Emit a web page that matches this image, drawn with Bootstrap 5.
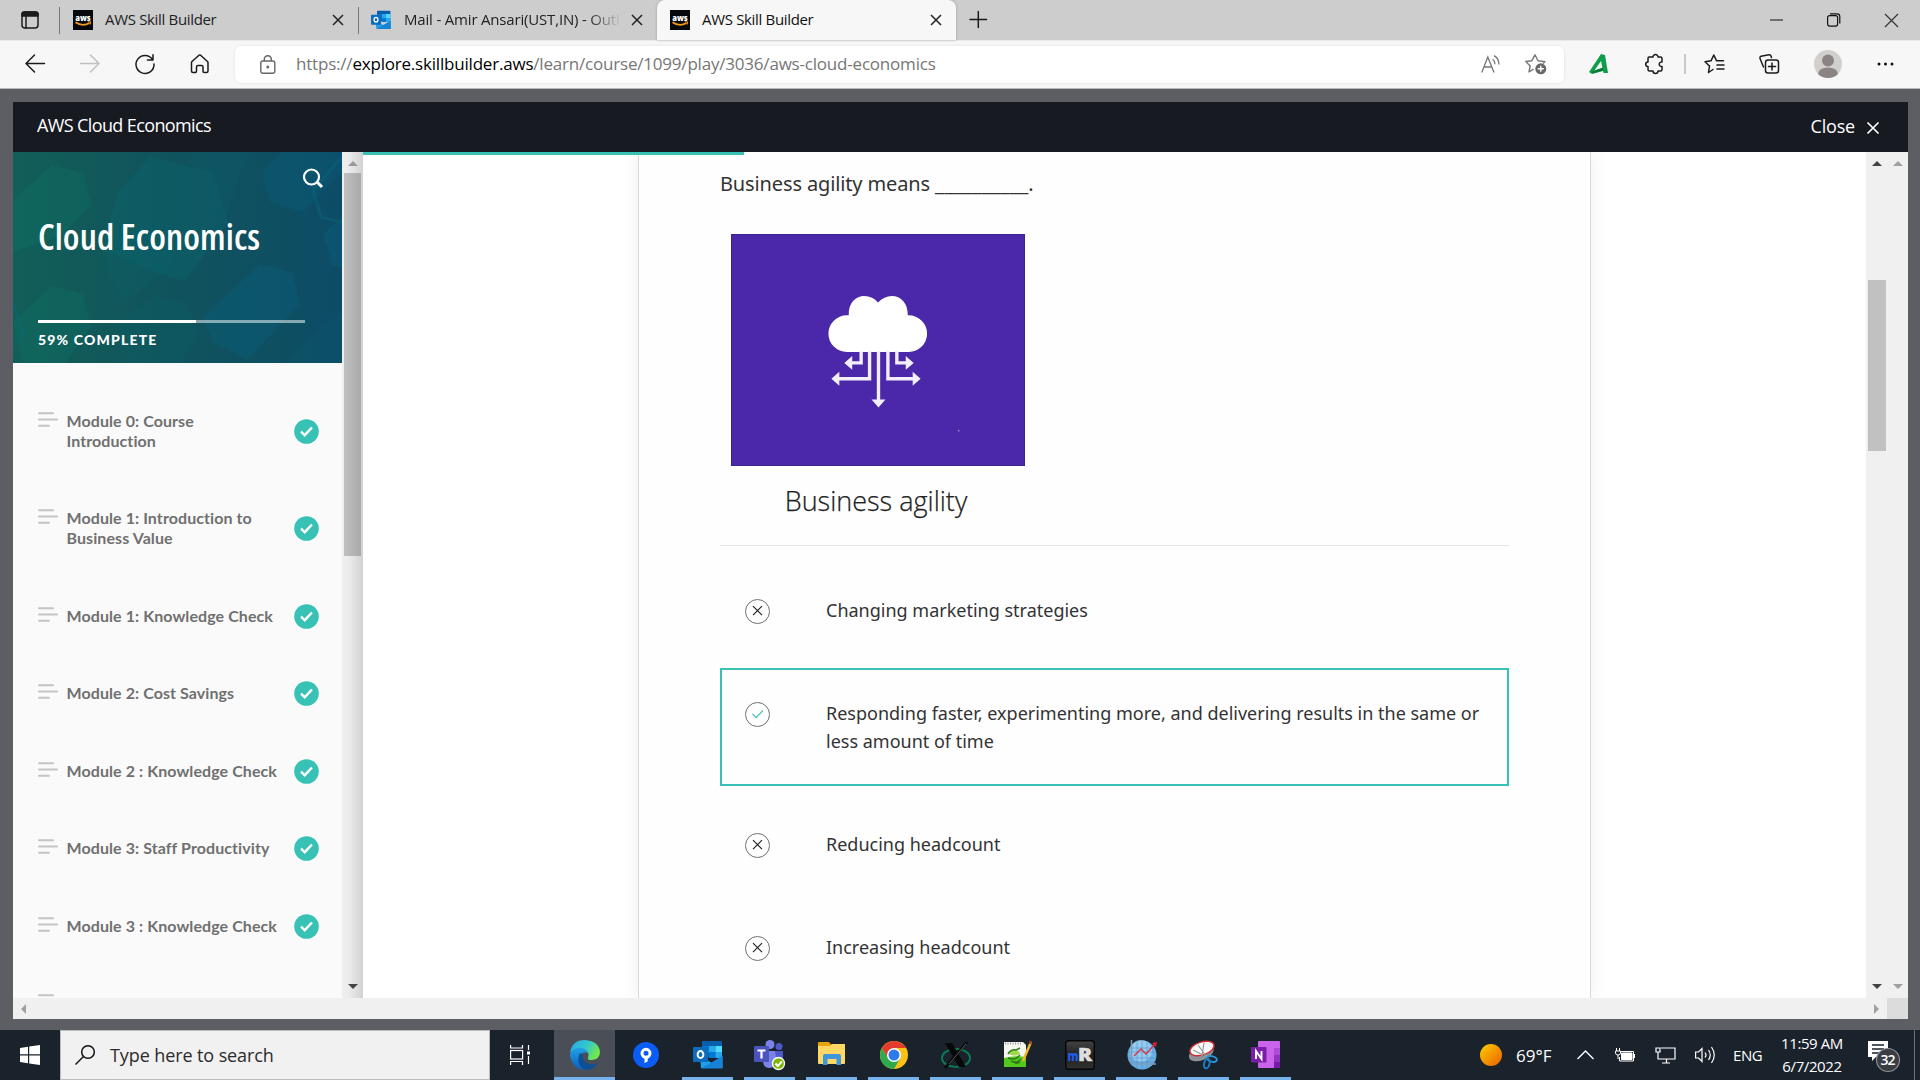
<!DOCTYPE html>
<html lang="en">
<head>
<meta charset="utf-8">
<title>AWS Skill Builder</title>
<link href="https://cdn.jsdelivr.net/npm/bootstrap@5.3.0/dist/css/bootstrap.min.css" rel="stylesheet">
<style>
html,body{height:1080px;width:1920px;overflow:hidden}
body{background:#5d5e63;font-family:"Open Sans","Noto Sans",sans-serif;color:#1b1b1b}
svg{display:block;flex:none;overflow:visible}
.ico{fill:none;stroke:#1b1b1b;stroke-width:1.5;stroke-linecap:round;stroke-linejoin:round}
.tabstrip{height:40px;background:#cdcdcd;font-size:15px;letter-spacing:-.33px;line-height:37px;color:#222;white-space:nowrap}
.tabstrip span{padding-bottom:2px}
.tab-a{width:299px;padding-left:13px;border-right:1.5px solid #77777a;border-image:linear-gradient(transparent 8px,#77777a 8px,#77777a 33px,transparent 33px) 1}
.tab-pin{width:60px;padding-left:21px;border-right:1.5px solid #77777a;border-image:linear-gradient(transparent 8px,#77777a 8px,#77777a 33px,transparent 33px) 1}
.tab-b{width:298px;padding-left:12px}
.tab-c{width:299px;padding-left:13px;background:#f7f7f7;border-radius:8px 8px 0 0;color:#111;box-shadow:0 0 3px rgba(0,0,0,.25)}
.tab-x{margin-right:14px}
.tab-name{margin-left:12px}
.tab-fade{width:219px;letter-spacing:-.18px;margin-left:13px;-webkit-mask-image:linear-gradient(90deg,#000 84%,transparent 99%)}
.win-ctl{gap:44px;margin-right:22px}
.toolbar{height:49px;background:#f7f7f7;border-top:1px solid #e9e9e9;border-bottom:1px solid #b9b9bb;padding-bottom:1px}
.nav-set{width:235px;padding-left:25px;gap:35px}
.urlbox{width:1329px;height:37px;background:#fff;border-radius:6px;padding:0 17px 0 25px;font-size:17px;letter-spacing:-.2px;line-height:36px;color:#767676;box-shadow:0 0 3px rgba(0,0,0,.1)}
.urltext{width:1185px;margin-left:20px;padding-bottom:1px}
.urltext span{color:#000}
.ext-set{padding-left:25px}
.ext-puzzle{margin-left:34px}
.ext-sep{margin:0 18px 0 21px}
.ext-fav,.ext-col{margin-right:34px}
.ext-user{margin-right:35px}
.player{width:1895px;height:917px;margin:13px 0 0 13px;background:#fff}
.player-head{height:50px;background:#171a21;color:#fff;font-size:18px;padding:0 29px 4px 24px}
.player-name{letter-spacing:-.62px}
.close-link{gap:12px;padding-top:2px;letter-spacing:-.2px}
.player-main{height:846px}
.outline{width:329px;background:#fafafa;overflow:hidden}
.outline-head{height:211px;position:relative;color:#fff}
.outline-head>.art{position:absolute;inset:0;overflow:hidden}
.outline-in{position:relative;padding:16px 19px 0 25px}
.course{font-size:36px;font-weight:600;font-stretch:75%;letter-spacing:.08px;line-height:44px;margin:27px 0 0;white-space:nowrap}
.prog{height:3px;width:267px;background:rgba(255,255,255,.5);margin-top:61px}
.prog>div{height:3px;background:#fff}
.pct{font:900 14px/20px Lato,sans-serif;letter-spacing:1.17px;margin-top:7px}
.lessons{padding-top:19px;font:700 16px/20px Lato,sans-serif;letter-spacing:.08px;color:#707070}
.lesson{padding:28.75px 23px 28.75px 25px}
.lesson .bars{margin:1px 8.5px auto 0}
.lesson-name{width:220px}
.tick{width:25px;height:25px;margin:-2px 0 -3px}
.vscroll{width:21px;background:#f0f0f0;padding:9px 0}
.vscroll-side{background:linear-gradient(90deg,#efefef,#ececec 30%,#d2d2d2)}
.vthumb{width:17px;height:383px;margin-top:7px;background:linear-gradient(90deg,#c0c0c0,#a9a9a9)}
.vthumb-main{width:18px;height:171px;margin-top:114px;background:#c1c1c1}
.stage{width:1503px;position:relative;overflow:hidden}
.stage-bar{position:absolute;left:0;top:0;height:3px;width:381px;background:#37c2b5;z-index:2}
.quiz{width:953px;margin-left:275px;height:846px;border:solid #d9d9d9;border-width:0 1px;background:#fefefe;box-shadow:0 0 18px rgba(0,0,0,.07);padding:16px 81px 0;font-family:"Noto Sans",sans-serif;color:#333}
.ask{font-size:20px;line-height:30px;letter-spacing:-.13px;margin:0;white-space:nowrap}
.ask span{font-size:21px;letter-spacing:0}
.pic{width:294px;height:232px;margin:35px 0 0 11px;background:#4b28a9;border:1px solid #3d248c}
.cap{width:294px;margin:15px 0 0 9px;font:300 27px/40px "Open Sans",sans-serif;text-align:center;color:#222;white-space:nowrap;-webkit-text-stroke:.25px #222}
.rule{height:1px;background:#e6e6e6;margin:24px 0 19px}
.choice{border:2px solid transparent;padding:29px 20px 29px 23px;font-size:18px;line-height:28px;margin-bottom:13px}
.choice.right{border-color:#37c2b5}
.choice svg{margin:3px 56px 0 0}
.hscroll{height:21px;background:#f0f0f0}
.hs-corner{width:21px;height:21px;background:#dcdcdc}
.taskbar{height:50px;margin-top:11px;background:#1a222c;color:#fff}
.startbtn{width:60px;padding-left:20px}
.searchbox{width:430px;height:50px;background:#f1f1f1;border:1px solid #bbb;color:#2b2b2b;font-size:18px;letter-spacing:-.1px;padding-left:14px}
.searchbox span{margin-left:15px}
.taskview{width:64px;padding-left:20px}
.app{width:51px;height:50px;margin-right:11px;padding-top:3px;border-bottom:3px solid #76b3ec}
.app.idle{border-color:transparent}
.app.front{width:61px;background:#4a4f57;margin-right:5px}
.tray-time{font-size:15px;letter-spacing:-.4px;line-height:23px;text-align:center;width:66px;margin-left:15px}
.wx{font-size:17px;width:40px;margin-left:14px;padding-top:2px}
.chev{margin-left:21px}
.batt{margin-left:21px}
.mon,.spk{margin-left:19px}
.eng{font-size:15px;letter-spacing:-.4px;width:31px;margin-left:17px}
.note{margin-left:23px}
.edgeline{width:1px;height:50px;background:#6a7078;margin:0 5px 0 13px}
</style>
<script src="https://cdn.jsdelivr.net/npm/bootstrap@5.3.0/dist/js/bootstrap.bundle.min.js"></script>
</head>
<body>
<svg width="0" height="0" class="position-absolute">
<defs>
<symbol id="x" viewBox="0 0 12 12"><path d="M1 1L11 11M11 1L1 11" fill="none" stroke="#222" stroke-width="1.500"/></symbol>
<symbol id="aws" viewBox="0 0 20 20"><rect width="20" height="20" fill="#05090d"/><text x="10" y="10.500" text-anchor="middle" font-family="Open Sans" font-weight="800" font-size="8.200" textLength="15.500" lengthAdjust="spacingAndGlyphs" letter-spacing="0" fill="#fff">aws</text><path d="M2.500 12.200Q9.500 17 16.500 13" fill="none" stroke="#f79a1c" stroke-width="1.700"/><path d="M14.800 12l3-.2-.7 2.800" fill="none" stroke="#f79a1c"/></symbol>
<symbol id="outlook" viewBox="0 0 30 28"><rect x="9" y="0" width="20" height="16" rx="1" fill="#0a5fad"/><path d="M16 5h6.500v6H16z" fill="#28a8ea"/><path d="M22.500 5H29v6h-6.500z" fill="#50d9ff"/><path d="M9 5h7v7H9z" fill="#0078d4"/><path d="M16 11h6.500v6H16z" fill="#0078d4"/><path d="M22.500 11H29v6h-6.500z" fill="#28a8ea"/><path d="M7 15l12 7 10.500-7v12H8z" fill="#1ca0e8"/><path d="M8 27.500L29.500 15v12.500z" fill="#1683d8"/><rect y="6" width="15" height="15" rx="1" fill="#0f6cbd"/><ellipse cx="7.500" cy="13.500" rx="2.900" ry="3.500" fill="none" stroke="#fff" stroke-width="1.900"/></symbol>
<symbol id="bars" viewBox="0 0 20 16"><path d="M1 1.200H15M1 7.500H19M1 13.800H11" stroke="#c4c4c4" stroke-width="2" stroke-linecap="round"/></symbol>
<symbol id="ok" viewBox="0 0 25 25"><circle cx="12.500" cy="12.500" r="12.300" fill="#37c2b5"/><path d="M7 12.700l3.700 3.500 7.300-7.700" fill="none" stroke="#fff" stroke-width="2.400"/></symbol>
<symbol id="no" viewBox="0 0 25 25"><circle cx="12.500" cy="12.500" r="12" fill="#fff" stroke="#707070"/><path d="M8 7.200l9 9M17 7.200l-9 9" stroke="#222" stroke-width="1.200"/></symbol>
</defs>
</svg>

<header class="tabstrip d-flex align-items-center">
  <div class="tab-pin d-flex align-items-center h-100"><svg width="18" height="18" class="ico"><rect x="1" y="1" width="16" height="16" rx="3"/><path d="M1 4V3q0-2 2-2h12q2 0 2 2v2H1z" fill="#1b1b1b"/><path d="M5 5V17"/></svg></div>
  <div class="tab-a d-flex align-items-center h-100"><svg width="20" height="20"><use href="#aws"/></svg><span class="tab-name flex-grow-1">AWS Skill Builder</span><svg width="12" height="12" class="tab-x"><use href="#x"/></svg></div>
  <div class="tab-b d-flex align-items-center h-100"><svg width="20" height="20"><use href="#outlook"/></svg><span class="tab-name tab-fade">Mail - Amir Ansari(UST,IN) - Outl</span><svg width="12" height="12" class="ms-2"><use href="#x"/></svg></div>
  <div class="tab-c d-flex align-items-center h-100"><svg width="20" height="20"><use href="#aws"/></svg><span class="tab-name flex-grow-1">AWS Skill Builder</span><svg width="12" height="12" class="tab-x"><use href="#x"/></svg></div>
  <svg width="18" height="18" class="ico me-auto tab-x ms-3"><path d="M-2 8.500H14.500M6.300 .5V16.500"/></svg>
  <div class="win-ctl d-flex align-items-center"><svg width="13" height="13"><path d="M0 6H13" stroke="#111"/></svg><svg width="14" height="14" fill="none" stroke="#111" stroke-width="1.200"><rect x=".6" y="2.600" width="10" height="10.500" rx="2"/><path d="M3 .8h7q2.800 0 2.800 2.800v7"/></svg><svg width="13" height="13"><path d="M0 0L13 13M13 0L0 13" stroke="#333" stroke-width="1.200"/></svg></div>
</header>

<nav class="toolbar d-flex align-items-center">
  <div class="nav-set d-flex align-items-center">
    <svg width="20" height="20" class="ico"><path d="M19.500 9.500H1M9.500 1L1 9.500 9.500 18"/></svg>
    <svg width="20" height="20" class="ico opacity-25"><path d="M.5 9.500H19M10.500 1L19 9.500 10.500 18"/></svg>
    <svg width="20" height="20" class="ico"><path d="M17.500 5.500A9 9 0 1 0 19 10M18 .8V6h-5.500"/></svg>
    <svg width="20" height="20" class="ico"><path d="M1.500 8.700Q1.500 8 2 7.500L9 1.200q.8-.6 1.600 0L17.500 7.500q.5.500.5 1.200V17q0 1.500-1.500 1.500h-2.300q-1.200 0-1.200-1.200V13q0-1.500-1.500-1.500H8q-1.500 0-1.500 1.500v4.300q0 1.200-1.200 1.200H3Q1.500 18.500 1.500 17z"/></svg>
  </div>
  <div class="urlbox d-flex align-items-center">
    <svg width="16" height="19" fill="none" stroke="#666" stroke-width="1.400"><rect x=".8" y="6" width="14" height="12.300" rx="2"/><path d="M4.300 6V4.200a3.500 3.500 0 0 1 7 0V6"/><circle cx="7.800" cy="12" r=".8" fill="#666"/></svg>
    <div class="urltext">https://<span>explore.skillbuilder.aws</span>/learn/course/1099/play/3036/aws-cloud-economics</div>
    <svg width="20" height="19" fill="none" stroke="#767676" stroke-width="1.300"><path d="M.8 17.500L6.800 2l6.200 15.500M3 12h7.800M11.500 4.300q2.400 1.500 2.500 5M13 .6q4.800 2.500 5 9"/></svg>
    <svg width="22" height="22" fill="none" stroke="#767676" stroke-width="1.400" class="ms-auto"><path d="M8.500 16.200L4 19l1.200-6L.8 8.500l6-.8L10 1.800l3 6 7 .8-2 2" stroke-linejoin="round"/><circle cx="15.800" cy="15.800" r="5.500" fill="#686868" stroke="none"/><path d="M15.800 12.800v6M12.800 15.800h6" stroke="#fff"/></svg>
  </div>
  <div class="ext-set d-flex align-items-center">
    <svg width="20" height="20"><path d="M0 18L12 0l4 1 3 18h-4.500L12 7 5 17l9-3v3L3 20z" fill="#0e9e49"/><path d="M4 17l10-3.500v3L3 19.500z" fill="#0a7a35"/></svg>
    <svg width="20" height="20" class="ico ext-puzzle"><path d="M5 3.500h4a2.500 2.500 0 1 1 5 0h2.500q1.500 0 1.500 1.500v3.500a2.300 2.300 0 1 0 0 4.500v3q0 1.500-1.500 1.500H14a2.500 2.500 0 0 1-5 0H5.500Q4 17.500 4 16v-3a2.300 2.300 0 1 1 0-4.600V5q0-1.500 1-1.500z" transform="translate(1 -.5)"/></svg>
    <svg width="2" height="20" class="ext-sep"><path d="M1 0V20" stroke="#b9b9b9" stroke-width="1.500"/></svg>
    <svg width="21" height="20" class="ico ext-fav"><path d="M9 15.500L4.500 18.500 5.500 12 1 7.800l6-1L9.800 1l2.800 5.800H19.500M13 11h7M13 15h7"/></svg>
    <svg width="21" height="20" class="ico ext-col"><path d="M4.500 13L1 4.500Q.5 2.800 2 2.200L10 .8q1.500-.2 2 1.200l.5 1.500"/><rect x="6.500" y="6" width="13" height="13" rx="2.500"/><path d="M13 9v7M9.500 12.500h7"/></svg>
    <svg width="28" height="28" class="ext-user"><circle cx="14" cy="14" r="14" fill="#d2d0ce"/><circle cx="14" cy="10.500" r="6" fill="#8a8583"/><path d="M4 24q1-6.500 10-6.500T24 24q-4 4-10 4t-10-4z" fill="#8a8583"/></svg>
    <svg width="17" height="6" fill="#111"><circle cx="2" cy="3" r="1.500"/><circle cx="8.500" cy="3" r="1.500"/><circle cx="15" cy="3" r="1.500"/></svg>
  </div>
</nav>

<main class="player">
  <div class="player-head d-flex align-items-center justify-content-between">
    <span class="player-name">AWS Cloud Economics</span>
    <span class="close-link d-flex align-items-center">Close <svg width="12" height="12" class="mt-1"><path d="M.5 .5L11.500 11.500M11.500 .5L.5 11.500" stroke="#fff" stroke-width="1.700"/></svg></span>
  </div>
  <div class="player-main d-flex">
    <aside class="outline">
      <div class="outline-head">
        <svg class="art" width="329" height="211">
          <defs><linearGradient id="hg"><stop offset="0" stop-color="#125e58"/><stop offset=".5" stop-color="#10535d"/><stop offset="1" stop-color="#0d4c66"/></linearGradient></defs>
          <rect width="329" height="211" fill="url(#hg)"/>
          <g fill="#0b7a68" fill-opacity=".25"><path d="M39 13L70 21 78 53 47 85 0 100V48z"/><path d="M39 134L70 142 78 174 52 211H10L0 170z"/></g>
          <g fill="#0a6f78" fill-opacity=".24"><path d="M137 5L200 20 215 71 172 129 150 123 89 98 105 40z"/><path d="M90 95L130 75 155 84 161 113 110 150 95 120z" opacity=".6"/><path d="M144 144L176 153 184 185 167 211H115L104 171z" opacity=".6"/><path d="M176 0h60l-25 70-11-50-22-6z" opacity=".5"/></g>
          <g fill="#086181" fill-opacity=".35"><path d="M249 20L270 0H329V20L290 60 257 51z" opacity=".8"/><path d="M247 112L280 121 287 153 234 208 200 190 190 165z"/><path d="M310 82L329 65V116L319 113z"/><path d="M290 190L329 160V211H275z" opacity=".4"/></g>
          <path d="M300 38l8 27 21 5M0 150l10 32-10 12M329 5l-29 33" fill="none" stroke="#0a6c80" stroke-opacity=".35" stroke-width="3"/>
        </svg>
        <div class="outline-in">
          <svg width="20" height="20" class="ms-auto" fill="none" stroke="#fff" stroke-width="2.200"><circle cx="8.500" cy="9" r="7.500"/><path d="M14 14l5 5" stroke-width="3"/></svg>
          <h1 class="course">Cloud Economics</h1>
          <div class="prog"><div style="width:59%"></div></div>
          <div class="pct">59% COMPLETE</div>
        </div>
      </div>
      <div class="lessons">
        <div class="lesson d-flex align-items-center"><svg class="bars" width="20" height="16"><use href="#bars"/></svg><span class="lesson-name">Module 0: Course<br>Introduction</span><svg width="25" height="25" class="tick ms-auto"><use href="#ok"/></svg></div>
        <div class="lesson d-flex align-items-center"><svg class="bars" width="20" height="16"><use href="#bars"/></svg><span class="lesson-name">Module 1: Introduction to<br>Business Value</span><svg width="25" height="25" class="tick ms-auto"><use href="#ok"/></svg></div>
        <div class="lesson d-flex align-items-center"><svg class="bars" width="20" height="16"><use href="#bars"/></svg><span class="lesson-name">Module 1: Knowledge Check</span><svg width="25" height="25" class="tick ms-auto"><use href="#ok"/></svg></div>
        <div class="lesson d-flex align-items-center"><svg class="bars" width="20" height="16"><use href="#bars"/></svg><span class="lesson-name">Module 2: Cost Savings</span><svg width="25" height="25" class="tick ms-auto"><use href="#ok"/></svg></div>
        <div class="lesson d-flex align-items-center"><svg class="bars" width="20" height="16"><use href="#bars"/></svg><span class="lesson-name">Module 2 : Knowledge Check</span><svg width="25" height="25" class="tick ms-auto"><use href="#ok"/></svg></div>
        <div class="lesson d-flex align-items-center"><svg class="bars" width="20" height="16"><use href="#bars"/></svg><span class="lesson-name">Module 3: Staff Productivity</span><svg width="25" height="25" class="tick ms-auto"><use href="#ok"/></svg></div>
        <div class="lesson d-flex align-items-center"><svg class="bars" width="20" height="16"><use href="#bars"/></svg><span class="lesson-name">Module 3 : Knowledge Check</span><svg width="25" height="25" class="tick ms-auto"><use href="#ok"/></svg></div>
        <div class="lesson d-flex"><svg class="bars" width="20" height="16"><use href="#bars"/></svg></div>
      </div>
    </aside>
    <div class="vscroll vscroll-side d-flex flex-column align-items-center">
      <svg width="10" height="5"><path d="M0 5L5 0l5 5z" fill="#999"/></svg>
      <div class="vthumb mb-auto"></div>
      <svg width="10" height="5"><path d="M0 0L5 5l5-5z" fill="#444"/></svg>
    </div>
    <section class="stage">
      <div class="stage-bar"></div>
      <div class="quiz">
        <p class="ask">Business agility means <span>__________</span>.</p>
        <svg class="pic" viewBox="0 0 294 232">
          <path d="M115.500 118a18.500 18.500 0 0 1 0-37H117.500C117 68 125 61.500 133 61.500Q142 62 147 68 153 62 161 61.500C170 61.500 177.500 69 177 81H178a18.500 18.500 0 0 1 0 37z" fill="#fff"/>
          <path d="M130 117v12h-10M138.500 117v28h-31M147.500 117v51M157 117v28h27M166 117v12h10" fill="none" stroke="#f2eefb" stroke-width="3.400"/>
          <g fill="#f2eefb"><path d="M113 129l8-7v14zM100 145l8-7v14zM190 145l-8-7v14zM183 129l-8-7v14zM147.500 174l-7-8h14z"/></g>
          <rect x="228" y="197" width="1" height="1" fill="#fff"/>
        </svg>
        <div class="cap">Business agility</div>
        <div class="rule"></div>
        <div class="choice d-flex align-items-start"><svg width="25" height="25"><use href="#no"/></svg><span>Changing marketing strategies</span></div>
        <div class="choice right d-flex align-items-start"><svg width="25" height="25"><circle cx="12.500" cy="12.500" r="12" fill="#fff" stroke="#707070"/><path d="M7.500 12l3.700 3.500L18 8.500" fill="none" stroke="#5cc4b9" stroke-width="1.300"/></svg><span>Responding faster, experimenting more, and delivering results in the same or less amount of time</span></div>
        <div class="choice d-flex align-items-start"><svg width="25" height="25"><use href="#no"/></svg><span>Reducing headcount</span></div>
        <div class="choice d-flex align-items-start"><svg width="25" height="25"><use href="#no"/></svg><span>Increasing headcount</span></div>
      </div>
    </section>
    <div class="vscroll d-flex flex-column align-items-center">
      <svg width="10" height="5"><path d="M0 5L5 0l5 5z" fill="#444"/></svg>
      <div class="vthumb-main mb-auto"></div>
      <svg width="10" height="5"><path d="M0 0L5 5l5-5z" fill="#444"/></svg>
    </div>
    <div class="vscroll d-flex flex-column align-items-center justify-content-between">
      <svg width="10" height="5"><path d="M0 5L5 0l5 5z" fill="#a0a0a0"/></svg>
      <svg width="10" height="5"><path d="M0 0L5 5l5-5z" fill="#a0a0a0"/></svg>
    </div>
  </div>
  <div class="hscroll d-flex align-items-center">
    <svg width="5" height="10" class="ms-2 me-auto"><path d="M5 0L0 5l5 5z" fill="#a0a0a0"/></svg>
    <svg width="5" height="10" class="me-2"><path d="M0 0L5 5 0 10z" fill="#a0a0a0"/></svg>
    <div class="hs-corner"></div>
  </div>
</main>

<footer class="taskbar d-flex align-items-center">
  <div class="startbtn"><svg width="20" height="20" fill="#fff"><path d="M0 3L8 1.800V9.300H0zM9.200 1.500L20 0V9.300H9.200zM0 10.500H8V18.200L0 17zM9.200 10.500H20V20L9.200 18.500z"/></svg></div>
  <div class="searchbox d-flex align-items-center"><svg width="20" height="20" fill="none" stroke="#111" stroke-width="1.500"><circle cx="13" cy="7" r="6.300"/><path d="M8.500 11.500L.5 19.500"/></svg><span>Type here to search</span></div>
  <div class="taskview"><svg width="21" height="20" fill="none" stroke="#fff" stroke-width="1.200"><path d="M.6 0V3H12.500V0M.6 20V16.500H12.500V20M18.500 0V5M18.500 11V19"/><rect x=".6" y="5.500" width="12" height="8.500"/><path d="M17 6.500h3v3h-3z" fill="#fff" stroke="none"/></svg></div>

  <div class="app front d-flex align-items-center justify-content-center"><svg width="30" height="30"><defs><linearGradient id="e1" x2="1" y2=".4"><stop stop-color="#26a7ec"/><stop offset=".6" stop-color="#35c9c8"/><stop offset="1" stop-color="#6ee84e"/></linearGradient><linearGradient id="e2" x2="0" y2="1"><stop stop-color="#22a0e6"/><stop offset="1" stop-color="#0c60ba"/></linearGradient></defs><path d="M0 13Q2 0 15 0 29 1 30 12q0 7-8 8-5 0-4-2 2-6-3-8Q5 7 0 13z" fill="url(#e1)"/><path d="M0 14Q3 7 10 8q6 0 8 5-7-2-8 4 0 8 7 12-8 2-13-4-4-5-4-11z" fill="url(#e2)"/><path d="M10 13q-5 10 4 16 8 3 14-6-6 3-11 0-5-3-4-8z" fill="#0d4f97"/></svg></div>
  <div class="app idle d-flex align-items-center justify-content-center"><svg width="26" height="26"><circle cx="13" cy="13" r="13" fill="#0a5cf5"/><circle cx="13" cy="11.300" r="4" fill="none" stroke="#fff" stroke-width="3"/><path d="M11.500 15h3.200v4.500l-3.200 1.500z" fill="#fff"/></svg></div>
  <div class="app d-flex align-items-center justify-content-center"><svg width="30" height="28"><use href="#outlook"/></svg></div>
  <div class="app d-flex align-items-center justify-content-center"><svg width="31" height="30"><circle cx="16" cy="4.500" r="4.500" fill="#7b83eb"/><circle cx="25" cy="6.500" r="3.500" fill="#5059c9"/><path d="M10 11h12v9q0 8-7 8-6 0-6-8z" fill="#7b83eb"/><path d="M21 11h8v7q0 6-6 6z" fill="#5059c9"/><rect y="6" width="15" height="16" rx="1" fill="#4b53bc"/><path d="M3.500 10.500h8M7.500 10.500v8" stroke="#fff" stroke-width="2.200"/><circle cx="24.500" cy="23.500" r="6" fill="#7ab800" stroke="#fff" stroke-width="1.300"/><path d="M21.500 23.500l2.300 2.500 4-4.500" stroke="#fff" stroke-width="2" fill="none"/></svg></div>
  <div class="app d-flex align-items-center justify-content-center"><svg width="28" height="26"><path d="M0 1q0-1 1-1h10l2 2.500H27v8H0z" fill="#e5a50a"/><path d="M0 4h12l2-2h13v19q0 1-1 1H1q-1 0-1-1z" fill="#ffd764"/><path d="M5 23V14q0-2 2-2h14q2 0 2 2v9h-4.500v-6h-9v6z" fill="#3c97dc"/></svg></div>
  <div class="app d-flex align-items-center justify-content-center"><svg width="28" height="28" viewBox="-14 -14 28 28"><circle r="14" fill="#fbc116"/><path d="M-12.100-7A14 14 0 0 1 12.100-7H0L-6 3.500z" fill="#e33b2e"/><path d="M-12.100-7A14 14 0 0 0 0 14L6 3.500-6 3.500z" fill="#2da94f"/><circle r="7" fill="#fff"/><circle r="5.500" fill="#2f7bea"/></svg></div>
  <div class="app d-flex align-items-center justify-content-center"><svg width="30" height="28"><ellipse cx="15" cy="17" rx="14" ry="9" fill="none" stroke="#0a7a55" stroke-width="2"/><path d="M4 2h7l14 24h-7z" fill="#050708"/><path d="M26 1L4 27" stroke="#050708" stroke-width="2.500"/><path d="M25 3L8 23" stroke="#6b7075" stroke-width=".8"/></svg></div>
  <div class="app d-flex align-items-center justify-content-center"><svg width="29" height="28"><path d="M1 1h19l3 3v22H1z" fill="#f4f6ef"/><path d="M1 17q10-3 22-1v10H1z" fill="#54c91d"/><path d="M2 2.500h17" stroke="#999" stroke-dasharray="1 1.500" stroke-width="2"/><path d="M6 13q1-4 6-4 4 0 5 4-5 3-11 0z" fill="#9edb4a"/><path d="M5 13q3-5 8-4l4-2M5 17q7 3 12-3M8 20q6 3 10-2M12 22.500l5-1" fill="none" stroke="#2f7a1a" stroke-width="1.500"/><path d="M28 1L20 20" stroke="#f0b52a" stroke-width="2.500"/><path d="M28 0l-1 3" stroke="#93422c" stroke-width="2.500"/></svg></div>
  <div class="app d-flex align-items-center justify-content-center"><svg width="30" height="30"><defs><linearGradient id="mr" x2="0" y2="1"><stop stop-color="#444"/><stop offset=".5" stop-color="#222"/><stop offset="1" stop-color="#303030"/></linearGradient></defs><rect x=".7" y=".7" width="28.600" height="28.600" rx="3" fill="url(#mr)" stroke="#050505" stroke-width="1.400"/><text x="2.500" y="20.500" font-family="Open Sans" font-size="14" font-weight="800" fill="#205ce8" textLength="11" lengthAdjust="spacingAndGlyphs">m</text><text x="13" y="20.500" font-family="Open Sans" font-size="18" font-weight="800" fill="#dedede" stroke="#dedede" stroke-width=".6" textLength="14" lengthAdjust="spacingAndGlyphs">R</text></svg></div>
  <div class="app d-flex align-items-center justify-content-center"><svg width="30" height="30"><circle cx="15" cy="15" r="14.500" fill="#69aee0"/><circle cx="14" cy="11" r="11" fill="#a9d4f3" opacity=".7"/><path d="M1 12h28M1 18h28M3 22h24M10 1v28M15 0v30M20 1v28M3 8h24" stroke="#4189c9" stroke-width=".5"/><path d="M4.500 0V24H29" fill="none" stroke="#7e9cba" stroke-width="1.500"/><path d="M7 16l7-7 5 5L28 4" fill="none" stroke="#db3340" stroke-width="1.300"/><path d="M25 3l5-1-1 5z" fill="#db1f2c"/></svg></div>
  <div class="app d-flex align-items-center justify-content-center"><svg width="29" height="28"><ellipse cx="13" cy="12" rx="13" ry="7" fill="#8d9298" transform="rotate(-22 13 14)"/><ellipse cx="13" cy="7.500" rx="12.500" ry="6.500" fill="#fafafa" stroke="#d42c2c" stroke-width="1.400" transform="rotate(-18 13 7.500)"/><path d="M9 4l8 11M15 2l-2 13M4 9l10 5" stroke="#999" stroke-width="1.200"/><ellipse cx="23" cy="18" rx="5" ry="2.700" fill="none" stroke="#2a94d8" stroke-width="2" transform="rotate(15 23 18)"/><ellipse cx="18" cy="22.500" rx="2.700" ry="5" fill="none" stroke="#1c7dc0" stroke-width="2" transform="rotate(15 18 22)"/></svg></div>
  <div class="app d-flex align-items-center justify-content-center"><svg width="30" height="28"><rect x="7" width="22" height="27" rx="1" fill="#ca64ea"/><path d="M23 7h6v7h-6z" fill="#ae4bd5"/><path d="M23 14h6v7h-6z" fill="#9332bf"/><path d="M23 21h6v6h-6z" fill="#7719aa"/><rect y="6" width="15.500" height="15.500" rx="1" fill="#7a1fa5"/><path d="M5 18V10l5.500 8V10" fill="none" stroke="#fff" stroke-width="1.900"/></svg></div>

  <div class="ms-auto d-flex align-items-center">
    <svg width="22" height="22"><defs><linearGradient id="sun" x2="1" y2="1"><stop stop-color="#ffd000"/><stop offset="1" stop-color="#e85f00"/></linearGradient></defs><circle cx="11" cy="11" r="11" fill="url(#sun)"/></svg>
    <span class="wx">69°F</span>
    <svg width="17" height="10" class="chev" fill="none" stroke="#fff" stroke-width="1.400"><path d="M.5 9L8.500 1l8 8"/></svg>
    <svg width="21" height="14" class="batt" fill="none" stroke="#fff"><path d="M5 3.500H18.500V13H4.500V9M19.500 6v4M1.500 0v3M4.500 0v3"/><path d="M.5 3h5v2q0 2-2.500 2T.5 5zM3 7v4"/><path d="M6.500 5h10.500v6.500H6.500z" fill="#fff"/></svg>
    <svg width="21" height="17" class="mon" fill="none" stroke="#fff" stroke-width="1.200"><path d="M6 1H20V12H3V6M11.500 12v4M7 16h8M1 1h4v4H1zM3 5v3"/></svg>
    <svg width="21" height="18" class="spk" fill="none" stroke="#fff" stroke-width="1.200"><path d="M.6 6h3L7 2.500v13L3.600 12h-3zM10 6.500q2 2.500 0 5M13.500 4q3.500 5 0 10M16.500 1q5.500 8 0 16"/></svg>
    <span class="eng">ENG</span>
    <div class="tray-time">11:59 AM<br>6/7/2022</div>
    <svg width="33" height="32" class="note"><path d="M0 2H20V18H8L4 22V18H0z" fill="#fff"/><path d="M4 6h12M4 10h12M4 14h8" stroke="#1a222c" stroke-width="1.300"/><circle cx="20" cy="21" r="11.500" fill="#3a3d42" stroke="#8b8e92" stroke-width="1.200"/><text x="20" y="26" font-family="Open Sans" font-size="14" font-weight="600" fill="#fff" text-anchor="middle" textLength="15">32</text></svg>
    <div class="edgeline"></div>
  </div>
</footer>
</body>
</html>
